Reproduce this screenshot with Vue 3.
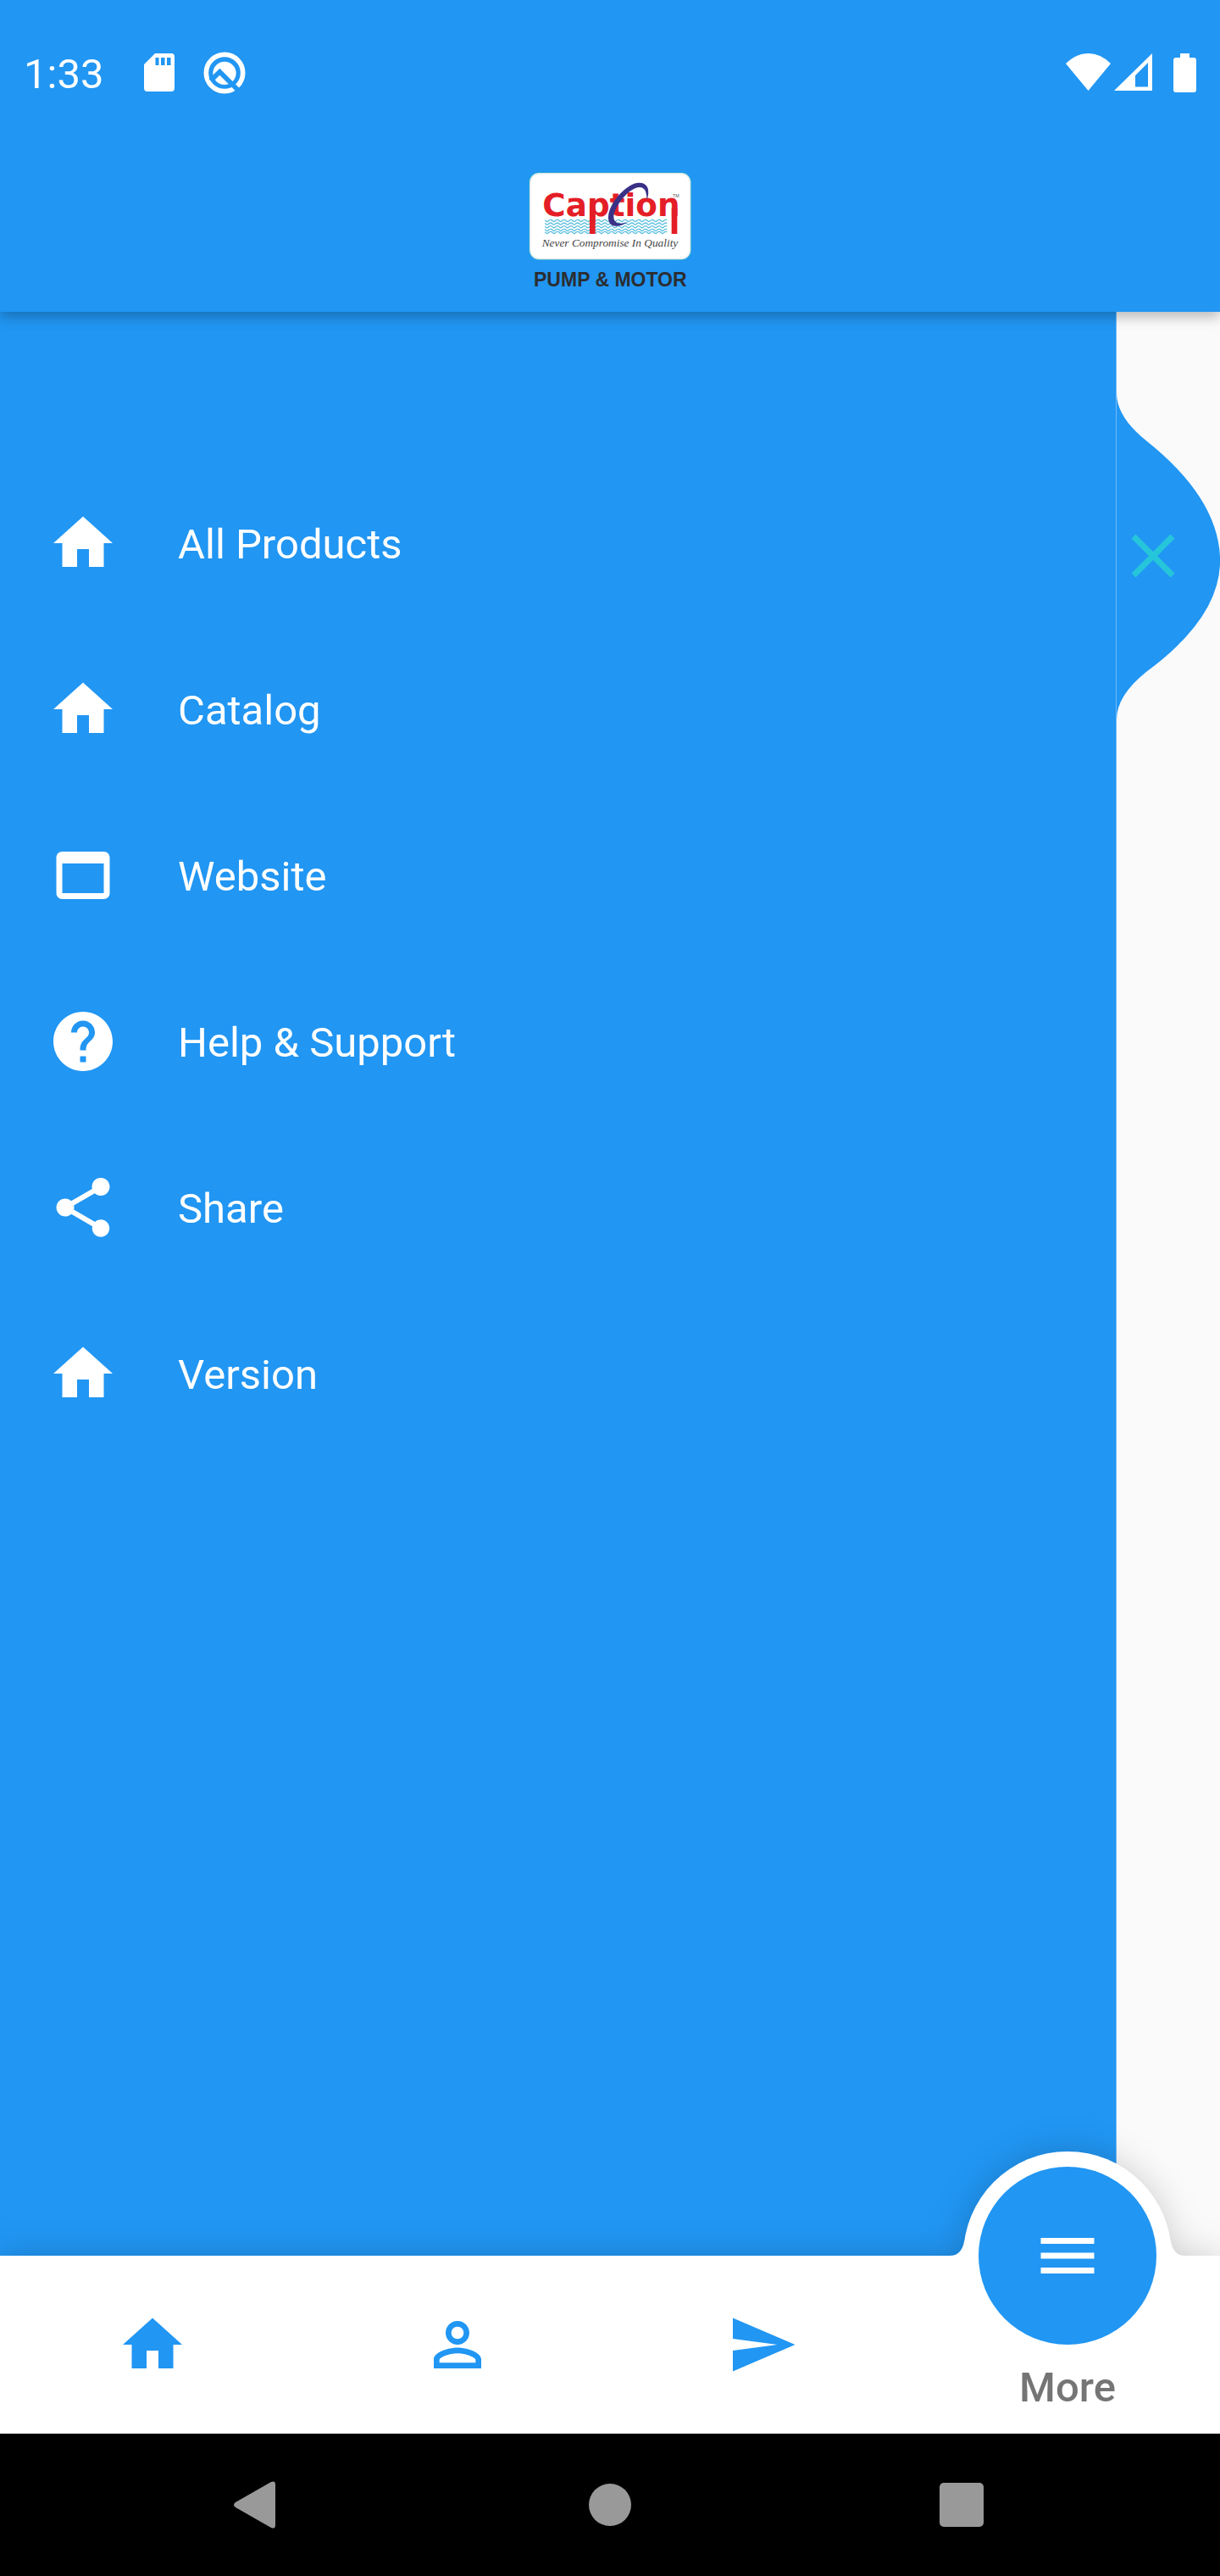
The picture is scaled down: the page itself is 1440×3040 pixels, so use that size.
<script setup>
const icons = {
  home: 'M10 20v-6h4v6h5v-8h3L12 3 2 12h3v8z',
  web: 'M19 4H5c-1.11 0-2 .9-2 2v12c0 1.1.89 2 2 2h14c1.1 0 2-.9 2-2V6c0-1.1-.89-2-2-2zm0 14H5V8h14v10z',
  help: 'M12 2C6.48 2 2 6.48 2 12s4.48 10 10 10 10-4.48 10-10S17.52 2 12 2zm1 17h-2v-2h2v2zm2.07-7.75l-.9.92C13.45 12.9 13 13.5 13 15h-2v-.5c0-1.1.45-2.1 1.17-2.83l1.24-1.26c.37-.36.59-.86.59-1.41 0-1.1-.9-2-2-2s-2 .9-2 2H8c0-2.21 1.79-4 4-4s4 1.79 4 4c0 .88-.36 1.68-.93 2.25z',
  share: 'M18 16.08c-.76 0-1.44.3-1.96.77L8.91 12.7c.05-.23.09-.46.09-.7s-.04-.47-.09-.7l7.05-4.11c.54.5 1.25.81 2.04.81 1.66 0 3-1.34 3-3s-1.34-3-3-3-3 1.34-3 3c0 .24.04.47.09.7L8.04 9.81C7.5 9.31 6.79 9 6 9c-1.66 0-3 1.34-3 3s1.34 3 3 3c.79 0 1.5-.31 2.04-.81l7.12 4.16c-.05.21-.08.43-.08.65 0 1.61 1.31 2.92 2.92 2.92s2.92-1.31 2.92-2.92-1.31-2.92-2.92-2.92z',
  person: 'M12 5.9a2.1 2.1 0 1 1 0 4.2 2.1 2.1 0 0 1 0-4.2m0 9c2.97 0 6.1 1.46 6.1 2.1v1.1H5.900V17c0-.64 3.13-2.1 6.1-2.1M12 4C9.79 4 8 5.79 8 8s1.79 4 4 4 4-1.79 4-4-1.79-4-4-4zm0 9c-2.67 0-8 1.34-8 4v3h16v-3c0-2.66-5.33-4-8-4z',
  send: 'M2 21l21-9L2 3v7l15 2-15 2z',
  menu: 'M3 18h18v-2H3v2zm0-5h18v-2H3v2zm0-7v2h18V6H3z'
}

const menu = [
  { label: 'All Products', icon: 'home' },
  { label: 'Catalog', icon: 'home' },
  { label: 'Website', icon: 'web' },
  { label: 'Help & Support', icon: 'help' },
  { label: 'Share', icon: 'share' },
  { label: 'Version', icon: 'home' }
]

const tabs = [
  { label: 'Home', icon: 'home' },
  { label: 'Profile', icon: 'person' },
  { label: 'Send', icon: 'send' }
]

// Rows of water ripples behind the logo word
const ripple = 'q6 9 12 3q5 -6 12 -3'
const waves = [209, 220, 231, 242, 251].map((y) => `M130 ${y}` + ripple.repeat(18))
</script>

<template>
  <div class="screen">
    <header class="top">
      <div class="status">
        <time class="clock">1:33</time>
        <div class="notices">
          <svg width="36" height="46" viewBox="0 0 36 46" aria-hidden="true">
            <path fill="#fff" fill-rule="evenodd" d="M13 0H32a4 4 0 0 1 4 4V41a4 4 0 0 1-4 4H4a4 4 0 0 1-4-4V13zM13.500 5v9h4V5zM20 5v9h4.500V5zM27 5v9h4.500V5z" />
          </svg>
          <svg width="50" height="50" viewBox="718 63 150 150" aria-hidden="true">
            <circle cx="793" cy="138" r="65" fill="none" stroke="#fff" stroke-width="17" />
            <circle cx="793" cy="139" r="41" fill="#fff" />
            <path d="M744 166L776 134L843 201" fill="none" stroke="#2196f3" stroke-width="17" />
          </svg>
        </div>
        <div class="signals">
          <svg width="154" height="46" viewBox="0 0 154 46" aria-hidden="true">
            <path fill="#fff" d="M0 12Q12 0 26.500 0T53 12L26.500 44z" />
            <path fill="#fff" fill-rule="evenodd" d="M102 0V44H57zM97 11L82 26V39.500H97z" />
            <path fill="#fff" d="M135 0h11v5h5a3 3 0 0 1 3 3V43a3 3 0 0 1-3 3H130a3 3 0 0 1-3-3V8a3 3 0 0 1 3-3h5z" />
          </svg>
        </div>
      </div>
      <div class="toolbar">
        <svg class="logo" viewBox="66 0 588 480" role="img" aria-label="Caption Pump and Motor">
          <rect x="73" y="40" width="575" height="311" rx="36" fill="#22aed0" />
          <rect x="77" y="44" width="567" height="303" rx="32" fill="#fff" stroke="#dfe6ea" stroke-width="4" />
          <path v-for="w in waves" :key="w" :d="w" fill="none" stroke="#58bddd" stroke-width="4" />
          <g fill="#e41e26">
            <text class="word" x="121" y="194">Caption</text>
            <path d="M288 150h20V258H288zM578 165h20V258H578z" />
          </g>
          <path fill="#3a3187" d="M491 138C503 100 492 76 462 77C420 78 352 150 354 203C356 236 390 238 424 216C396 226 374 222 373 198C374 160 430 92 465 93C485 94 489 110 491 138Z" />
          <text class="mark" x="582" y="128">TM</text>
          <text class="motto" x="360" y="304">Never Compromise In Quality</text>
          <text class="line" x="361" y="445">PUMP &amp; MOTOR</text>
        </svg>
      </div>
    </header>

    <main class="body">
      <aside class="drawer">
        <nav class="menu" aria-label="Menu">
          <a v-for="item in menu" :key="item.label" class="row" href="#">
            <svg class="icon" viewBox="0 0 24 24" aria-hidden="true"><path :d="icons[item.icon]" /></svg>
            <span class="label">{{ item.label }}</span>
          </a>
        </nav>
        <button class="handle" type="button" aria-label="Close menu">
          <svg width="122" height="385" viewBox="0 0 35 110" preserveAspectRatio="none" aria-hidden="true">
            <path fill="#2196f3" d="M0 0Q0 8 10 16Q34 35 35 55Q36 75 10 94Q0 102 0 110Z" />
          </svg>
          <svg class="cross" width="52" height="52" viewBox="0 0 52 52" aria-hidden="true">
            <path d="M3 3L49 49M49 3L3 49" stroke="#26c6da" stroke-width="7" />
          </svg>
        </button>
      </aside>
    </main>

    <nav class="tabs" aria-label="Sections">
      <button v-for="tab in tabs" :key="tab.label" class="tab" type="button" :aria-label="tab.label">
        <svg class="icon" viewBox="0 0 24 24" aria-hidden="true"><path :d="icons[tab.icon]" /></svg>
      </button>
      <button class="tab active" type="button">
        <svg class="bump" width="280" height="235" viewBox="-140 -130 280 235" aria-hidden="true">
          <circle r="123" fill="#fff" />
          <path fill="#fff" d="M-139 1V0C-129 0-124-6-121.600-18H121.600C124-6 129 0 139 0V1Z" />
          <circle r="105" fill="#2196f3" />
          <path :d="icons.menu" fill="#fff" transform="translate(-42 -42) scale(3.5)" />
        </svg>
        <span class="caption">More</span>
      </button>
    </nav>

    <footer class="system">
      <button type="button" aria-label="Back">
        <svg width="60" height="60" viewBox="0 0 60 60" aria-hidden="true">
          <path fill="#999" d="M3 27L45 3Q50 1 50 6V54Q50 59 45 57L3 33Q-1 30 3 27Z" />
        </svg>
      </button>
      <button type="button" aria-label="Home">
        <svg width="60" height="60" viewBox="0 0 60 60" aria-hidden="true"><circle cx="30" cy="30" r="25" fill="#999" /></svg>
      </button>
      <button type="button" aria-label="Recent apps">
        <svg width="60" height="60" viewBox="0 0 60 60" aria-hidden="true"><rect x="4" y="4" width="52" height="52" rx="5" fill="#999" /></svg>
      </button>
    </footer>
  </div>
</template>

<style>
body {
  margin: 0;
}
</style>

<style scoped>
.screen {
  display: flex;
  flex-direction: column;
  min-height: 100vh;
  overflow: hidden;
  background: #fafafa;
  font-family: Roboto, "Noto Sans", sans-serif;
  font-size: 49px;
  line-height: 60px;
}

button {
  padding: 0;
  border: 0;
  background: none;
  font: inherit;
}

svg {
  display: block;
}

.icon {
  width: 84px;
  height: 84px;
  fill: currentColor;
}

.top {
  position: relative;
  z-index: 2;
  background: #2196f3;
  box-shadow: 0 6px 14px rgba(0, 0, 0, 0.26);
}

.status {
  display: flex;
  align-items: center;
  height: 172px;
  padding: 0 28px;
  color: #fff;
}

.clock,
.label {
  padding-top: 4px;
}

.notices {
  display: flex;
  align-items: center;
  gap: 34px;
  margin-left: 48px;
}

.signals {
  margin-left: auto;
}

.toolbar {
  display: flex;
  align-items: center;
  justify-content: center;
  height: 196px;
}

.logo {
  width: 196px;
  height: 160px;
}

.word {
  font: bold 112px "DejaVu Sans", sans-serif;
}

.mark {
  font: 16px "Liberation Sans", sans-serif;
  fill: #555;
}

.motto {
  font: italic 40px "Liberation Serif", serif;
  fill: #444;
  text-anchor: middle;
}

.line {
  font: bold 69px "Liberation Sans", sans-serif;
  fill: #2b2d31;
  text-anchor: middle;
}

.body {
  display: flex;
  flex: 1;
}

.drawer {
  position: relative;
  box-sizing: border-box;
  width: calc(100% - 122px);
  padding-top: 175px;
  border-right: 1px solid #72bbf8;
  background: #2196f3;
}

.row {
  display: flex;
  align-items: center;
  gap: 70px;
  height: 196px;
  padding-left: 56px;
  color: #fff;
  text-decoration: none;
}

.handle {
  position: absolute;
  top: 96px;
  left: calc(100% + 1px);
}

.cross {
  position: absolute;
  top: 166px;
  left: 17px;
}

.tabs {
  display: grid;
  grid-template-columns: repeat(4, 1fr);
  height: 210px;
  background: #fff;
  filter: drop-shadow(0 0 20px rgba(0, 0, 0, 0.18));
}

.tab {
  display: flex;
  align-items: center;
  justify-content: center;
  color: #2196f3;
}

.active {
  position: relative;
  align-items: flex-end;
  padding-bottom: 24px;
  color: #757575;
  font-weight: 500;
}

.bump {
  position: absolute;
  bottom: 105px;
  left: calc(50% - 140px);
}

.system {
  position: relative;
  display: grid;
  grid-template-columns: repeat(3, 1fr);
  height: 168px;
  padding: 0 97px;
  background: #000;
}

.system button {
  display: flex;
  align-items: center;
  justify-content: center;
}
</style>
